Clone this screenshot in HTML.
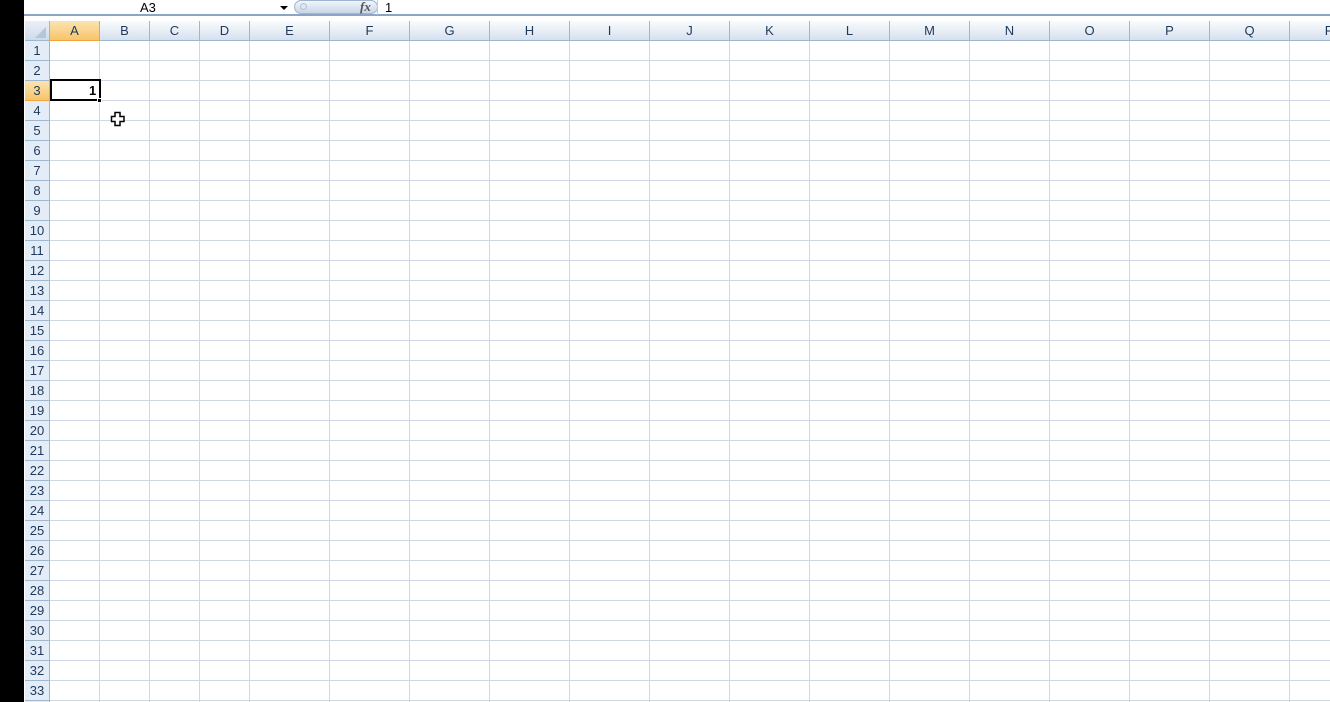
<!DOCTYPE html>
<html><head><meta charset="utf-8"><style>
*{margin:0;padding:0;box-sizing:border-box}
body{width:1330px;height:702px;overflow:hidden;background:#fff;position:relative;font-family:"Liberation Sans",Arial,sans-serif;font-size:13px;color:#1e395b}
.abs{position:absolute}
#black{left:0;top:0;width:24px;height:702px;background:#000}
#fbar{left:24px;top:0;width:1306px;height:16px;background:#fff;border-bottom:2px solid #8ca4c5}
#grid{left:50px;top:41px;width:1280px;height:661px;
background:repeating-linear-gradient(to bottom,transparent 0,transparent 19px,#d0d7e5 19px,#d0d7e5 20px)}
.vl{position:absolute;top:41px;width:1px;height:661px;background:#d0d7e5}
#colh{left:25px;top:21px;width:1305px;height:20px;background:linear-gradient(#f9fcfd,#d6e0ee);border-bottom:1px solid #9eb6ce}
.ch{position:absolute;top:21px;height:20px;line-height:20px;text-align:center;border-right:1px solid #9eb6ce;font-size:13px;color:#1e395b}
#rowh{left:25px;top:41px;width:25px;height:661px;background:#e4ecf7;border-right:1px solid #9eb6ce}
.rh{position:absolute;left:25px;width:24px;height:20px;line-height:20px;text-align:center;border-bottom:1px solid #9eb6ce;font-size:13px;color:#1e395b}
</style></head><body>
<div class="abs" id="black"></div>
<div class="abs" id="fbar">
 <div class="abs" style="left:116px;top:0;font-size:13px;color:#000">A3</div>
 <div class="abs" style="left:256px;top:6px;width:0;height:0;border-left:4px solid transparent;border-right:4px solid transparent;border-top:4px solid #000"></div>
 <div class="abs" style="left:270px;top:0;width:84px;height:14px;border-radius:7px;background:linear-gradient(#f2f5fa,#c9d6e8);border:1px solid #9eb6ce"></div>
 <div class="abs" style="left:276px;top:3px;width:7px;height:7px;border-radius:50%;background:#dfe6ef;border:1px solid #b3c2d6"></div>
 <div class="abs" style="left:336px;top:-1px;font-family:'Liberation Serif',serif;font-style:italic;font-weight:bold;font-size:13px;color:#555">fx</div>
 <div class="abs" style="left:353px;top:0;width:1px;height:15px;background:#c0cad8"></div>
 <div class="abs" style="left:361px;top:0;font-size:13px;color:#000">1</div>
</div>
<div class="abs" id="grid"></div>
<div class="vl" style="left:99px"></div><div class="vl" style="left:149px"></div><div class="vl" style="left:199px"></div><div class="vl" style="left:249px"></div><div class="vl" style="left:329px"></div><div class="vl" style="left:409px"></div><div class="vl" style="left:489px"></div><div class="vl" style="left:569px"></div><div class="vl" style="left:649px"></div><div class="vl" style="left:729px"></div><div class="vl" style="left:809px"></div><div class="vl" style="left:889px"></div><div class="vl" style="left:969px"></div><div class="vl" style="left:1049px"></div><div class="vl" style="left:1129px"></div><div class="vl" style="left:1209px"></div><div class="vl" style="left:1289px"></div>
<div class="abs" id="colh"></div>
<div class="abs" style="left:25px;top:21px;width:25px;height:20px;background:linear-gradient(#eaf0f8,#cfdbe9);border-right:1px solid #9eb6ce;border-bottom:1px solid #9eb6ce"></div>
<div class="abs" style="left:35px;top:27px;width:0;height:0;border-left:11px solid transparent;border-bottom:11px solid #b4c6dc"></div>
<div class="ch" style="left:50px;width:50px;background:linear-gradient(#fbe4b0,#f7c46c);border-bottom:1px solid #f2a33a;border-right-color:#f2a33a">A</div>
<div class="ch" style="left:100px;width:50px">B</div><div class="ch" style="left:150px;width:50px">C</div><div class="ch" style="left:200px;width:50px">D</div><div class="ch" style="left:250px;width:80px">E</div><div class="ch" style="left:330px;width:80px">F</div><div class="ch" style="left:410px;width:80px">G</div><div class="ch" style="left:490px;width:80px">H</div><div class="ch" style="left:570px;width:80px">I</div><div class="ch" style="left:650px;width:80px">J</div><div class="ch" style="left:730px;width:80px">K</div><div class="ch" style="left:810px;width:80px">L</div><div class="ch" style="left:890px;width:80px">M</div><div class="ch" style="left:970px;width:80px">N</div><div class="ch" style="left:1050px;width:80px">O</div><div class="ch" style="left:1130px;width:80px">P</div><div class="ch" style="left:1210px;width:80px">Q</div><div class="ch" style="left:1290px;width:80px">R</div>
<div class="abs" id="rowh"></div>
<div class="rh" style="top:41px">1</div><div class="rh" style="top:61px">2</div><div class="rh" style="top:81px;background:linear-gradient(#fbe4b0,#f7c46c);border-color:#f2a33a">3</div><div class="rh" style="top:101px">4</div><div class="rh" style="top:121px">5</div><div class="rh" style="top:141px">6</div><div class="rh" style="top:161px">7</div><div class="rh" style="top:181px">8</div><div class="rh" style="top:201px">9</div><div class="rh" style="top:221px">10</div><div class="rh" style="top:241px">11</div><div class="rh" style="top:261px">12</div><div class="rh" style="top:281px">13</div><div class="rh" style="top:301px">14</div><div class="rh" style="top:321px">15</div><div class="rh" style="top:341px">16</div><div class="rh" style="top:361px">17</div><div class="rh" style="top:381px">18</div><div class="rh" style="top:401px">19</div><div class="rh" style="top:421px">20</div><div class="rh" style="top:441px">21</div><div class="rh" style="top:461px">22</div><div class="rh" style="top:481px">23</div><div class="rh" style="top:501px">24</div><div class="rh" style="top:521px">25</div><div class="rh" style="top:541px">26</div><div class="rh" style="top:561px">27</div><div class="rh" style="top:581px">28</div><div class="rh" style="top:601px">29</div><div class="rh" style="top:621px">30</div><div class="rh" style="top:641px">31</div><div class="rh" style="top:661px">32</div><div class="rh" style="top:681px">33</div>
<div class="abs" style="left:50px;top:79px;width:51px;height:22px;border:2px solid #000;background:#fff"></div>
<div class="abs" style="left:89px;top:83px;font-size:13px;font-weight:bold;color:#000">1</div>
<div class="abs" style="left:97px;top:98px;width:5px;height:5px;background:#000;border:1px solid #fff"></div>
<svg class="abs" style="left:110px;top:111px" width="16" height="16" viewBox="0 0 16 16"><path d="M5 1.5h5v4h4v5h-4v4h-5v-4h-3.5v-5h3.5z" fill="#fff" stroke="#000" stroke-width="1.5"/></svg>
</body></html>
